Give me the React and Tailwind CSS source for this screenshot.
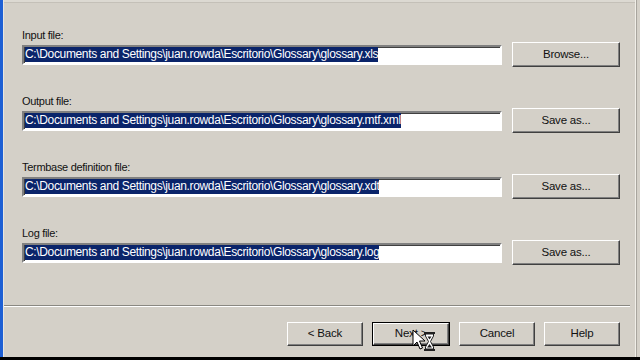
import React from "react";

const base = "C:\\Documents and Settings\\juan.rowda\\Escritorio\\Glossary\\";

const rows = [
  { label: "Input file:", file: "glossary.xls", btn: "Browse..." },
  { label: "Output file:", file: "glossary.mtf.xml", btn: "Save as..." },
  { label: "Termbase definition file:", file: "glossary.xdt", btn: "Save as..." },
  { label: "Log file:", file: "glossary.log", btn: "Save as..." },
];

function Btn({ children, def = false, w = "w-[108px]", h = "h-[25px]" }) {
  const inner = (
    <div
      className={`flex items-center justify-center ${def ? "w-full h-full" : `${w} ${h}`} bg-[#d4d0c8] border border-t-white border-l-white border-b-[#404040] border-r-[#404040] shadow-[inset_-1px_-1px_0_#808080] text-[11.5px] tracking-[-0.2px] text-[#111]`}
    >
      {children}
    </div>
  );
  if (def) {
    return <div className={`${w} ${h} border border-black`}>{inner}</div>;
  }
  return inner;
}

function Cursor() {
  return (
    <svg
      className="absolute left-[410px] top-[327px]"
      width="28"
      height="28"
      viewBox="0 0 28 28"
    >
      <path
        d="M3 3 L3 19 L7 15 L10 22 L12.5 21 L9.5 14 L15 14 Z"
        fill="white"
        stroke="black"
        strokeWidth="1"
        strokeLinejoin="round"
      />
      <g transform="translate(14 5)">
        <rect x="0" y="0" width="11" height="2" fill="#202020" />
        <rect x="0" y="17" width="11" height="2" fill="#202020" />
        <path
          d="M1.5 2 L9.5 2 L9.5 4 L6.5 9.5 L9.5 15 L9.5 17 L1.5 17 L1.5 15 L4.5 9.5 L1.5 4 Z"
          fill="white"
          stroke="#202020"
          strokeWidth="1"
        />
        <path d="M3 15.5 L5.5 12 L8 15.5 Z" fill="#202020" />
        <path d="M3.5 4.5 L7.5 4.5 L5.5 7.5 Z" fill="#202020" />
      </g>
    </svg>
  );
}

export default function App() {
  return (
    <div
      className="relative w-[640px] h-[360px] overflow-hidden bg-[#d4d0c8] flex flex-col"
      style={{ fontFamily: '"Liberation Sans", Arial, sans-serif' }}
    >
      <div className="flex flex-1 min-h-0">
        <div className="w-[3px] bg-[#1d5fd4]" />
        <div className="w-[1px] bg-[#e8e6e0]" />
        <div className="flex-1 flex flex-col min-w-0">
          <div className="h-[3px] bg-[#dcd9d2] border-b border-[#c4c0b8]" />
          <div className="flex-1 flex flex-col pl-[18px] pt-[25px] gap-[27px]">
            {rows.map((r) => (
              <div key={r.label} className="flex flex-col">
                <div className="h-[14px] leading-[14px] text-[11px] tracking-[-0.3px] text-[#111]">
                  {r.label}
                </div>
                <div className="flex items-center h-[25px]">
                  <div className="w-[480px] h-[20px] bg-white border-2 border-t-[#808080] border-l-[#808080] border-b-white border-r-white shadow-[inset_1px_1px_0_#404040] flex items-center overflow-hidden">
                    <span className="ml-[1px] bg-[#0a246a] text-white text-[12px] tracking-[-0.35px] leading-[15px] whitespace-nowrap">
                      {base + r.file}
                    </span>
                  </div>
                  <div className="ml-[10px]">
                    <Btn>{r.btn}</Btn>
                  </div>
                </div>
              </div>
            ))}
          </div>
          <div className="mr-[5px] h-[2px] border-t border-t-[#8a8882] border-b border-b-white" />
          <div className="h-[50px] flex items-start justify-end pr-[15px] pt-[15px] gap-[9px]">
            <Btn w="w-[76px]" h="h-[24px]">&lt; Back</Btn>
            <Btn def w="w-[78px]" h="h-[24px]">Next &gt;</Btn>
            <Btn w="w-[76px]" h="h-[24px]">Cancel</Btn>
            <Btn w="w-[76px]" h="h-[24px]">Help</Btn>
          </div>
        </div>
        <div className="w-[1px] bg-[#f0eee8]" />
        <div className="w-[1px] bg-[#a8a59e]" />
        <div className="w-[3px] bg-[#d4d0c8]" />
      </div>
      <div className="h-[3px] bg-black" />
      <Cursor />
    </div>
  );
}
